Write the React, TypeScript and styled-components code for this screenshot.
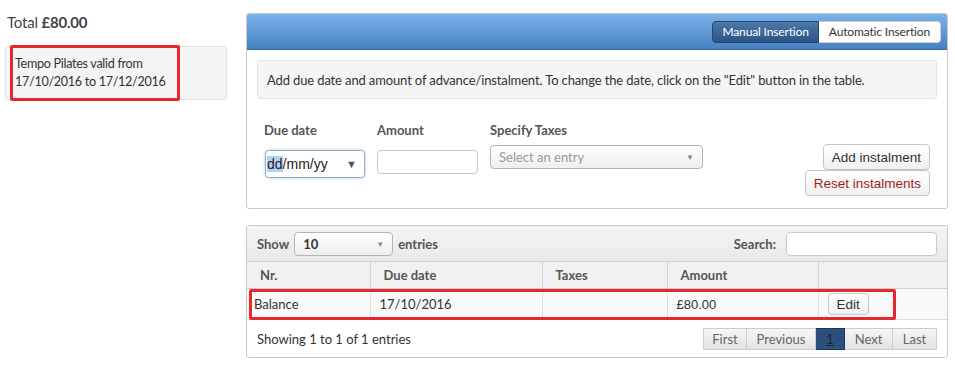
import React from 'react';
import styled, { createGlobalStyle } from 'styled-components';

const GlobalStyle = createGlobalStyle`
  html, body {
    margin: 0;
    padding: 0;
    background: #ffffff;
  }
  body {
    font-family: Lato, "Open Sans", sans-serif;
    font-size: 13px;
    color: #333333;
  }
`;

const ui = `Lato, "Open Sans", sans-serif`;
const native = `"Liberation Sans", Arial, sans-serif`;

const Page = styled.div`
  display: flex;
  align-items: flex-start;
  gap: 19px;
  padding: 10px 7px 0 5px;
  width: 955px;
  box-sizing: border-box;
`;

const Side = styled.div`
  width: 222px;
  flex: none;
`;

const Total = styled.div`
  font-size: 15px;
  line-height: 20px;
  padding: 2px 0 0 2px;
  color: #444;
  letter-spacing: -0.2px;
  b {
    font-weight: 700;
  }
`;

const Note = styled.div`
  position: relative;
  margin-top: 14px;
  background: #f4f4f4;
  border: 1px solid #e3e3e3;
  border-radius: 3px;
  padding: 8px 9px;
  line-height: 18px;
  font-size: 12.6px;
  letter-spacing: -0.3px;
  color: #333;
`;

const Marker = styled.div`
  position: absolute;
  border: 3px solid #e8262d;
  border-radius: 2px;
  box-sizing: border-box;
  pointer-events: none;
`;

const Main = styled.div`
  flex: 1;
  display: flex;
  flex-direction: column;
  gap: 16px;
  padding-top: 3px;
`;

const Panel = styled.div`
  border: 1px solid #c9c9c9;
  border-radius: 3px;
  background: #fff;
  overflow: hidden;
`;

const Head = styled.div`
  height: 35px;
  background: linear-gradient(#7ab2ea, #4682c2);
  border-bottom: 1px solid #35669e;
  display: flex;
  justify-content: flex-end;
  align-items: center;
  padding-right: 6px;
`;

const Toggle = styled.div`
  display: flex;
  height: 22px;
`;

const ToggleBtn = styled.div<{ $active?: boolean }>`
  display: flex;
  align-items: center;
  padding: 0 ${(p) => (p.$active ? 9 : 10)}px;
  font-size: 12px;
  letter-spacing: -0.15px;
  font-family: ${ui};
  color: ${(p) => (p.$active ? '#fff' : '#333')};
  background: ${(p) => (p.$active ? 'linear-gradient(#4b78aa, #2c5485)' : '#fff')};
  border: 1px solid ${(p) => (p.$active ? '#24466e' : '#cfcfcf')};
  border-radius: ${(p) => (p.$active ? '4px 0 0 4px' : '0 4px 4px 0')};
  border-left-width: ${(p) => (p.$active ? '1px' : '0')};
`;

const Body = styled.div`
  padding: 10px 10px 12px 10px;
`;

const Well = styled.div`
  height: 37px;
  display: flex;
  align-items: center;
  padding: 0 9px;
  background: #f5f5f5;
  border: 1px solid #e3e3e3;
  border-radius: 3px;
  font-size: 13px;
  letter-spacing: -0.13px;
  color: #333;
`;

const FormRow = styled.div`
  display: flex;
  align-items: flex-start;
  margin-top: 22px;
  padding: 0 7px;
  height: 75px;
`;

const Field = styled.div<{ $w: number; $gap: number }>`
  width: ${(p) => p.$w}px;
  margin-right: 13px;
  display: flex;
  flex-direction: column;
  label {
    font-weight: 700;
    font-size: 13px;
    color: #555;
    line-height: 18px;
    margin-bottom: ${(p) => p.$gap}px;
  }
`;

const DateBox = styled.div`
  width: 100px;
  height: 28px;
  box-sizing: border-box;
  margin-left: 1px;
  border: 1px solid #9aaec7;
  border-radius: 4px;
  box-shadow: 0 0 3px rgba(82, 128, 190, 0.5);
  display: flex;
  align-items: center;
  padding: 0 7px 0 1px;
  font-family: ${native};
  font-size: 14px;
  color: #222;
  mark {
    background: #b3d1f5;
    color: #222;
  }
  span.arrow {
    margin-left: auto;
    font-size: 11px;
    color: #555;
  }
`;

const TextBox = styled.div<{ $w: number; $h: number }>`
  width: ${(p) => p.$w}px;
  height: ${(p) => p.$h}px;
  box-sizing: border-box;
  border: 1px solid #c8c8c8;
  border-radius: 4px;
  background: #fff;
`;

const SelectBox = styled.div<{ $w: number; $bold?: boolean }>`
  width: ${(p) => p.$w}px;
  height: 24px;
  box-sizing: border-box;
  border: 1px solid #b4b4b4;
  border-radius: 4px;
  background: linear-gradient(#ffffff, #eeeeee);
  display: flex;
  align-items: center;
  padding: 0 8px;
  font-size: 13px;
  font-weight: ${(p) => (p.$bold ? 700 : 400)};
  color: ${(p) => (p.$bold ? '#333' : '#999')};
  span.arrow {
    margin-left: auto;
    font-size: 8px;
    color: #888;
  }
`;

const Actions = styled.div`
  margin-left: auto;
  margin-top: 23px;
  display: flex;
  flex-direction: column;
  align-items: flex-end;
`;

const Button = styled.button<{ $danger?: boolean; $h?: number }>`
  height: ${(p) => p.$h ?? 26}px;
  padding: 0 8px;
  font-family: ${native};
  font-size: 13.5px;
  color: ${(p) => (p.$danger ? '#a01d1d' : '#333')};
  background: linear-gradient(#ffffff, #f0f0f0);
  border: 1px solid #c6c6c6;
  border-radius: 4px;
  cursor: pointer;
`;

const Toolbar = styled.div`
  height: 35px;
  background: linear-gradient(#f5f5f5, #e8e8e8);
  border-bottom: 1px solid #d0d0d0;
  display: flex;
  align-items: center;
  padding: 0 10px;
  font-weight: 700;
  color: #555;
  gap: 5px;
`;

const SearchBox = styled.div`
  margin-left: auto;
  display: flex;
  align-items: center;
  gap: 10px;
`;

const TableWrap = styled.div`
  position: relative;
`;

const Table = styled.table`
  width: 100%;
  border-collapse: collapse;
  table-layout: fixed;
`;

const Th = styled.th`
  height: 26px;
  text-align: left;
  padding: 0 0 0 13px;
  font-size: 13px;
  font-weight: 700;
  color: #555;
  background: #f1f1f1;
  border-right: 1px solid #d6d6d6;
  border-bottom: 1px solid #cfcfcf;
  &:last-child {
    border-right: none;
  }
`;

const Td = styled.td<{ $pad?: number }>`
  height: 30px;
  padding: 0 0 0 ${(p) => p.$pad ?? 9}px;
  font-size: 13px;
  color: #333;
  background: #f9f9f9;
  border-right: 1px dotted #c4c4c4;
  border-bottom: 1px solid #dcdcdc;
  &:last-child {
    border-right: none;
  }
`;

const Money = styled.span`
  font-family: ${native};
  font-size: 13px;
`;

const Footer = styled.div`
  height: 37px;
  display: flex;
  align-items: center;
  padding: 0 10px;
  color: #333;
`;

const Pager = styled.div`
  margin-left: auto;
  display: flex;
`;

const PageBtn = styled.div<{ $w: number; $active?: boolean }>`
  width: ${(p) => p.$w}px;
  height: 22px;
  box-sizing: border-box;
  display: flex;
  align-items: center;
  justify-content: center;
  font-size: 13px;
  color: ${(p) => (p.$active ? '#222' : '#666')};
  text-decoration: ${(p) => (p.$active ? 'underline' : 'none')};
  background: ${(p) => (p.$active ? '#2d4f7b' : 'linear-gradient(#f6f6f6, #e2e2e2)')};
  border: 1px solid ${(p) => (p.$active ? '#1d3657' : '#cccccc')};
  & + & {
    border-left: none;
  }
`;

const cols = [123, 172, 125, 151, 129];

export default function App() {
  return (
    <>
      <GlobalStyle />
      <Page>
        <Side>
          <Total>
            Total <b>£80.00</b>
          </Total>
          <Note>
            Tempo Pilates valid from
            <br />
            17/10/2016 to 17/12/2016
            <Marker style={{ left: 4, top: -2, width: 170, height: 56 }} />
          </Note>
        </Side>

        <Main>
          <Panel>
            <Head>
              <Toggle>
                <ToggleBtn $active>Manual Insertion</ToggleBtn>
                <ToggleBtn>Automatic Insertion</ToggleBtn>
              </Toggle>
            </Head>
            <Body>
              <Well>
                Add due date and amount of advance/instalment. To change the date, click on the "Edit" button in the table.
              </Well>
              <FormRow>
                <Field $w={100} $gap={11}>
                  <label>Due date</label>
                  <DateBox>
                    <mark>dd</mark>/mm/yy<span className="arrow">▼</span>
                  </DateBox>
                </Field>
                <Field $w={100} $gap={11}>
                  <label>Amount</label>
                  <TextBox $w={101} $h={24} />
                </Field>
                <Field $w={213} $gap={6}>
                  <label>Specify Taxes</label>
                  <SelectBox $w={213}>
                    Select an entry<span className="arrow">▼</span>
                  </SelectBox>
                </Field>
                <Actions>
                  <Button $h={26}>Add instalment</Button>
                  <Button $danger $h={26}>Reset instalments</Button>
                </Actions>
              </FormRow>
            </Body>
          </Panel>

          <Panel>
            <Toolbar>
              Show
              <SelectBox $w={99} $bold>
                10<span className="arrow">▼</span>
              </SelectBox>
              entries
              <SearchBox>
                Search:
                <TextBox $w={151} $h={24} />
              </SearchBox>
            </Toolbar>
            <TableWrap>
              <Table>
                <colgroup>
                  {cols.map((w, i) => (
                    <col key={i} style={{ width: w }} />
                  ))}
                </colgroup>
                <thead>
                  <tr>
                    <Th>Nr.</Th>
                    <Th>Due date</Th>
                    <Th>Taxes</Th>
                    <Th>Amount</Th>
                    <Th />
                  </tr>
                </thead>
                <tbody>
                  <tr>
                    <Td $pad={7}>Balance</Td>
                    <Td>17/10/2016</Td>
                    <Td />
                    <Td>
                      <Money>£80.00</Money>
                    </Td>
                    <Td>
                      <Button $h={22}>Edit</Button>
                    </Td>
                  </tr>
                </tbody>
              </Table>
              <Marker style={{ left: 2, top: 27, width: 647, height: 31 }} />
            </TableWrap>
            <Footer>
              Showing 1 to 1 of 1 entries
              <Pager>
                <PageBtn $w={44}>First</PageBtn>
                <PageBtn $w={69}>Previous</PageBtn>
                <PageBtn $w={29} $active>1</PageBtn>
                <PageBtn $w={48}>Next</PageBtn>
                <PageBtn $w={44}>Last</PageBtn>
              </Pager>
            </Footer>
          </Panel>
        </Main>
      </Page>
    </>
  );
}
